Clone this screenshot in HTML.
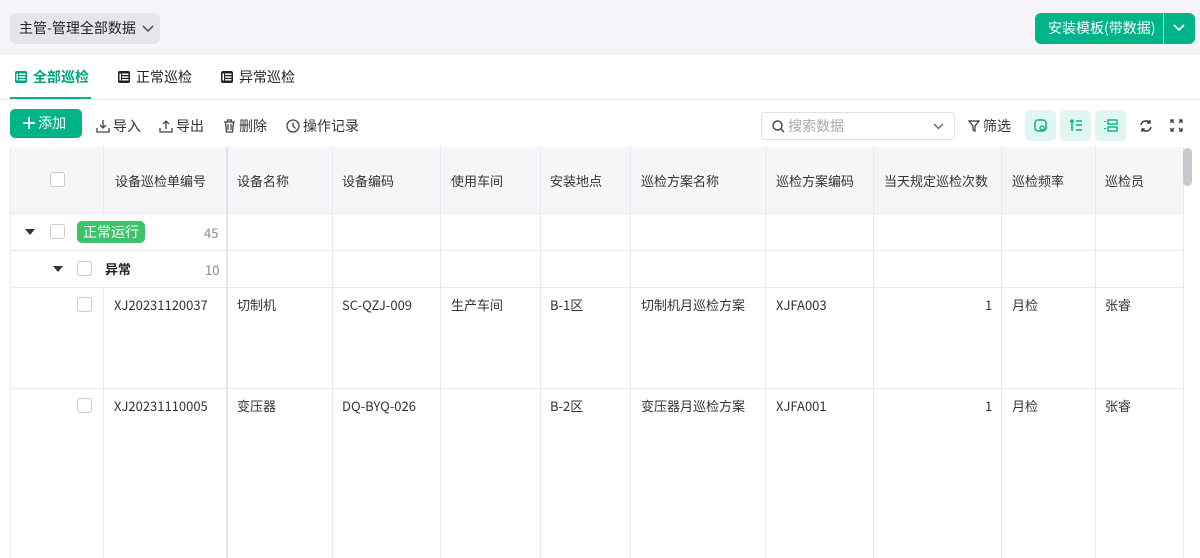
<!DOCTYPE html>
<html><head><meta charset="utf-8"><style>
*{box-sizing:border-box;margin:0;padding:0}
body{width:1200px;height:558px;overflow:hidden;background:#fff;font-family:"Noto Sans CJK SC","Liberation Sans",sans-serif;font-size:13px;color:#333;position:relative;line-height:18px}
.a{position:absolute}
.top{left:0;top:0;width:1200px;height:54px;background:#f5f5f9;border-bottom:1px solid #e8e8ee}
.sel{left:10px;top:13px;width:150px;height:31px;background:#e5e6eb;border-radius:6px;font-size:14px;line-height:31px;padding-left:9px;color:#222}
.btn{left:1035px;top:13px;width:160px;height:31px;background:#00b48a;border-radius:6px;color:#fff;font-size:14px;line-height:31px}
.tab{top:67px;font-size:14px;color:#222;display:flex;align-items:center;gap:6px;line-height:20px}
.tool{top:116px;font-size:14px;color:#333;display:flex;align-items:center;gap:3px;line-height:20px}
.v{background:#e8e9ee;width:1px}
.h{background:#e8e9ee;height:1px}
.th{top:172px;font-size:13px;color:#333}
.td{font-size:13px;color:#333}
.cb{width:15px;height:15px;border:1px solid #c9ccd3;border-radius:3px;background:#fff}
.sq{top:110px;width:31px;height:31px;background:#e1f6f1;border-radius:5px}
</style></head><body>
<div class="a top"></div>
<div class="a sel">主管-管理全部数据 <svg width="12" height="8" style="margin-left:3px" viewBox="0 0 12 8"><path d="M1 1l5 5 5-5" stroke="#444" stroke-width="1.4" fill="none"/></svg></div>
<div class="a btn"><span style="position:absolute;left:13px">安装模板(带数据)</span><div class="a" style="left:128px;top:0;width:1px;height:31px;background:#8fdcc8"></div><svg class="a" style="left:138px;top:11px" width="12" height="8" viewBox="0 0 12 8"><path d="M1 1l5 5 5-5" stroke="#fff" stroke-width="1.6" fill="none"/></svg></div>

<svg width="0" height="0" style="position:absolute"><defs><symbol id="ti" viewBox="0 0 12 12"><rect x="0" y="0" width="12" height="12" rx="2" fill="currentColor"/><rect x="4" y="2.5" width="6.5" height="1.5" fill="#fff"/><rect x="4" y="5.3" width="6.5" height="1.5" fill="#fff"/><rect x="4" y="8" width="6.5" height="1.5" fill="#fff"/><rect x="1.5" y="2.5" width="1.5" height="7" fill="#fff"/></symbol></defs></svg>
<div class="a tab" style="left:15px;color:#00a57f;font-weight:bold"><svg width="12" height="12"><use href="#ti"/></svg>全部巡检</div>
<div class="a" style="left:10px;top:97px;width:81px;height:2px;background:#00b48a"></div>
<div class="a tab" style="left:118px"><svg width="12" height="12" style="color:#222"><use href="#ti"/></svg>正常巡检</div>
<div class="a tab" style="left:221px"><svg width="12" height="12" style="color:#222"><use href="#ti"/></svg>异常巡检</div>
<div class="a h" style="left:0;top:99px;width:1200px"></div>

<div class="a" style="left:10px;top:109px;width:72px;height:29px;background:#00b48a;border-radius:5px;color:#fff;font-size:14px;line-height:29px;padding-left:13px"><svg width="12" height="12" viewBox="0 0 12 12" style="vertical-align:-1px"><path d="M6 0v12M0 6h12" stroke="#fff" stroke-width="1.8"/></svg> 添加</div>
<div class="a tool" style="left:96px"><svg width="14" height="14" viewBox="0 0 14 14"><path d="M7 1v8M4 6l3 3 3-3M1 9v4h12V9" stroke="#444" stroke-width="1.3" fill="none"/></svg>导入</div>
<div class="a tool" style="left:159px"><svg width="14" height="14" viewBox="0 0 14 14"><path d="M7 10V2M4 5l3-3 3 3M1 9v4h12V9" stroke="#444" stroke-width="1.3" fill="none"/></svg>导出</div>
<div class="a tool" style="left:223px"><svg width="13" height="14" viewBox="0 0 13 14"><path d="M1 3h11M4.5 3V1h4v2M2.5 3l1 10h6l1-10M5 5v6M8 5v6" stroke="#444" stroke-width="1.3" fill="none"/></svg> 删除</div>
<div class="a tool" style="left:286px"><svg width="14" height="14" viewBox="0 0 14 14"><circle cx="7" cy="7" r="6" stroke="#444" stroke-width="1.3" fill="none"/><path d="M7 3.5V7l2.5 2.5" stroke="#444" stroke-width="1.3" fill="none"/></svg>操作记录</div>

<div class="a" style="left:761px;top:112px;width:194px;height:28px;border:1px solid #dcdfe6;border-radius:4px;color:#aaa;font-size:14px;line-height:26px;padding-left:10px"><svg width="13" height="13" viewBox="0 0 13 13" style="vertical-align:-2px"><circle cx="5.5" cy="5.5" r="4.5" stroke="#444" stroke-width="1.4" fill="none"/><path d="M9 9l3 3" stroke="#444" stroke-width="1.4"/></svg> 搜索数据<svg class="a" style="right:10px;top:10px" width="11" height="7" viewBox="0 0 11 7"><path d="M1 1l4.5 4.5L10 1" stroke="#666" stroke-width="1.3" fill="none"/></svg></div>
<div class="a tool" style="left:968px"><svg width="12" height="12" viewBox="0 0 12 12"><path d="M1 1h10L7 6v5L5 10V6z" stroke="#333" stroke-width="1.2" fill="none"/></svg> 筛选</div>
<div class="a sq" style="left:1025px"><svg class="a" style="left:9px;top:9px" width="13" height="13" viewBox="0 0 13 13"><rect x="1" y="1" width="11" height="11" rx="3" stroke="#00b48a" stroke-width="1.5" fill="none"/><circle cx="8" cy="9" r="2" stroke="#00b48a" stroke-width="1.3" fill="none"/></svg></div>
<div class="a sq" style="left:1060px"><svg class="a" style="left:9px;top:9px" width="14" height="13" viewBox="0 0 14 13"><path d="M3 12V1M1 3l2-2 2 2M7 2h6M7 6h6M7 11h6" stroke="#00b48a" stroke-width="1.5" fill="none"/></svg></div>
<div class="a sq" style="left:1095px"><svg class="a" style="left:8px;top:9px" width="15" height="13" viewBox="0 0 15 13"><path d="M2 2v1M2 9v1" stroke="#00b48a" stroke-width="2"/><rect x="5" y="1" width="9" height="4" stroke="#00b48a" stroke-width="1.4" fill="none"/><rect x="5" y="8" width="9" height="4" stroke="#00b48a" stroke-width="1.4" fill="none"/></svg></div>
<svg class="a" style="left:1139px;top:119px" width="14" height="14" viewBox="0 0 14 14"><path d="M2 6a5 5 0 0 1 9-2M12 8a5 5 0 0 1-9 2" stroke="#333" stroke-width="1.4" fill="none"/><path d="M11 1v3H8M3 13v-3h3" stroke="#333" stroke-width="1.3" fill="none"/></svg>
<svg class="a" style="left:1170px;top:119px" width="13" height="13" viewBox="0 0 13 13"><path d="M1 4V1h3M9 1h3v3M12 9v3H9M4 12H1V9M1 1l3 3M12 1L9 4M12 12L9 9M1 12l3-3" stroke="#333" stroke-width="1.2" fill="none"/></svg>

<div class="a" style="left:10px;top:147px;width:1173px;height:66px;background:#f5f6f8;border-radius:6px 0 0 0"></div>
<div class="a v" style="left:10px;top:147px;height:411px"></div>
<div class="a v" style="left:103px;top:147px;height:66px"></div>
<div class="a v" style="left:103px;top:287px;height:271px"></div>
<div class="a" style="left:226px;top:147px;height:411px;width:2px;background:#e2e5ea"></div>
<div class="a v" style="left:332px;top:147px;height:411px"></div>
<div class="a v" style="left:440px;top:147px;height:411px"></div>
<div class="a v" style="left:540px;top:147px;height:411px"></div>
<div class="a v" style="left:630px;top:147px;height:411px"></div>
<div class="a v" style="left:765px;top:147px;height:411px"></div>
<div class="a v" style="left:873px;top:147px;height:411px"></div>
<div class="a v" style="left:1001px;top:147px;height:411px"></div>
<div class="a v" style="left:1095px;top:147px;height:411px"></div>
<div class="a v" style="left:1183px;top:147px;height:411px"></div>
<div class="a h" style="left:10px;top:213px;width:1173px"></div>
<div class="a h" style="left:10px;top:250px;width:1173px"></div>
<div class="a h" style="left:10px;top:287px;width:1173px"></div>
<div class="a h" style="left:10px;top:388px;width:1173px"></div>
<div class="a" style="left:1183px;top:148px;width:9px;height:38px;background:#c6c8cd;border-radius:5px"></div>

<div class="a cb" style="left:50px;top:172px"></div>
<div class="a th" style="left:115px">设备巡检单编号</div>
<div class="a th" style="left:237px">设备名称</div>
<div class="a th" style="left:342px">设备编码</div>
<div class="a th" style="left:451px">使用车间</div>
<div class="a th" style="left:550px">安装地点</div>
<div class="a th" style="left:641px">巡检方案名称</div>
<div class="a th" style="left:776px">巡检方案编码</div>
<div class="a th" style="left:884px">当天规定巡检次数</div>
<div class="a th" style="left:1012px">巡检频率</div>
<div class="a th" style="left:1105px">巡检员</div>

<div class="a" style="left:25px;top:229px;border:5px solid transparent;border-top:6px solid #333"></div>
<div class="a cb" style="left:50px;top:224px"></div>
<div class="a" style="left:77px;top:221px;width:68px;height:22px;background:#3cc36b;border-radius:5px;color:#fff;font-size:14px;line-height:22px;text-align:center">正常运行</div>
<div class="a td" style="left:204px;top:224px;color:#888">45</div>
<div class="a" style="left:53px;top:266px;border:5px solid transparent;border-top:6px solid #333"></div>
<div class="a cb" style="left:77px;top:261px"></div>
<div class="a td" style="left:105px;top:260px;font-weight:bold;color:#222">异常</div>
<div class="a td" style="left:205px;top:261px;color:#888">10</div>

<div class="a cb" style="left:77px;top:297px"></div>
<div class="a td" style="left:114px;top:296px">XJ20231120037</div>
<div class="a td" style="left:237px;top:296px">切制机</div>
<div class="a td" style="left:342px;top:296px">SC-QZJ-009</div>
<div class="a td" style="left:451px;top:296px">生产车间</div>
<div class="a td" style="left:550px;top:296px">B-1区</div>
<div class="a td" style="left:641px;top:296px">切制机月巡检方案</div>
<div class="a td" style="left:776px;top:296px">XJFA003</div>
<div class="a td" style="left:985px;top:296px">1</div>
<div class="a td" style="left:1012px;top:296px">月检</div>
<div class="a td" style="left:1105px;top:296px">张睿</div>

<div class="a cb" style="left:77px;top:398px"></div>
<div class="a td" style="left:114px;top:397px">XJ20231110005</div>
<div class="a td" style="left:237px;top:397px">变压器</div>
<div class="a td" style="left:342px;top:397px">DQ-BYQ-026</div>
<div class="a td" style="left:550px;top:397px">B-2区</div>
<div class="a td" style="left:641px;top:397px">变压器月巡检方案</div>
<div class="a td" style="left:776px;top:397px">XJFA001</div>
<div class="a td" style="left:985px;top:397px">1</div>
<div class="a td" style="left:1012px;top:397px">月检</div>
<div class="a td" style="left:1105px;top:397px">张睿</div>
</body></html>
